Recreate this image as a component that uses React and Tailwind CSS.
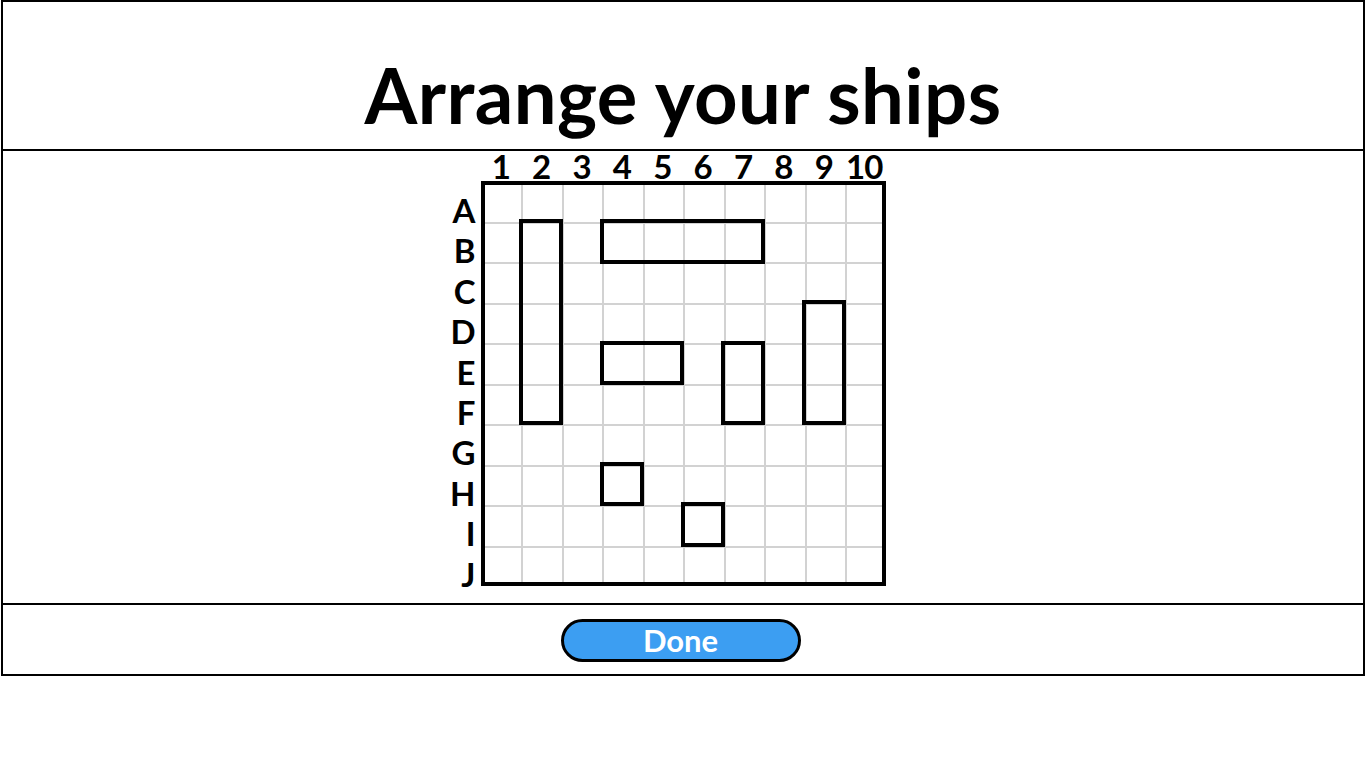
const ROWS = ["A", "B", "C", "D", "E", "F", "G", "H", "I", "J"];
const COLS = [1, 2, 3, 4, 5, 6, 7, 8, 9, 10];
const CELL = 40.4;

// r / c are zero-based, h / w in cells
const SHIPS = [
  { r: 1, c: 1, h: 5, w: 1 },
  { r: 1, c: 3, h: 1, w: 4 },
  { r: 3, c: 8, h: 3, w: 1 },
  { r: 4, c: 3, h: 1, w: 2 },
  { r: 4, c: 6, h: 2, w: 1 },
  { r: 7, c: 3, h: 1, w: 1 },
  { r: 8, c: 5, h: 1, w: 1 },
];

const font = { fontFamily: '"Comic Sans MS", Lato, "DejaVu Sans", sans-serif' };

function Board() {
  return (
    <div className="relative w-[405px] h-[405px] bg-white">
      <div className="grid grid-cols-10 grid-rows-10 w-full h-full">
        {Array.from({ length: 100 }).map((_, i) => (
          <div key={i} className="border-l-2 border-t-2 border-[#d2d2d2]" />
        ))}
      </div>
      <div className="absolute inset-0 border-4 border-black" />
      {SHIPS.map((s, i) => (
        <div
          key={i}
          className="absolute border-4 border-black"
          style={{
            left: s.c * CELL - 2,
            top: s.r * CELL - 2,
            width: s.w * CELL + 4,
            height: s.h * CELL + 4,
          }}
        />
      ))}
    </div>
  );
}

export default function App() {
  return (
    <div className="w-[1366px] h-[768px] bg-white" style={font}>
      <div className="ml-px w-[1364px] border-2 border-black">
        {/* header */}
        <div className="h-[149px] border-b-2 border-black flex justify-center pt-[55px]">
          <h1 className="text-[76px] leading-none font-bold text-black tracking-[0.4px]">
            Arrange your ships
          </h1>
        </div>

        {/* board */}
        <div className="h-[454px] border-b-2 border-black flex justify-center">
          <div className="flex flex-col">
            <div className="flex h-[30px] ml-[32px] mr-[32px]">
              {COLS.map((n) => (
                <div
                  key={n}
                  className="w-[40.4px] text-center text-[33px] leading-[30px] font-bold text-black -tracking-[1px]"
                >
                  {n}
                </div>
              ))}
            </div>
            <div className="flex mr-[32px]">
              <div className="w-[32px] flex flex-col pt-[9px]">
                {ROWS.map((l) => (
                  <div
                    key={l}
                    className="h-[40.4px] pr-[5px] text-right text-[33px] leading-[40.4px] font-bold text-black"
                  >
                    {l}
                  </div>
                ))}
              </div>
              <Board />
            </div>
          </div>
        </div>

        {/* footer */}
        <div className="h-[69px] flex justify-center pt-[14px]">
          <button className="w-[240px] h-[43px] mr-[5px] rounded-full border-[3px] border-black bg-[#3c9ef2] text-white text-[31px] font-bold leading-none">
            Done
          </button>
        </div>
      </div>
    </div>
  );
}
